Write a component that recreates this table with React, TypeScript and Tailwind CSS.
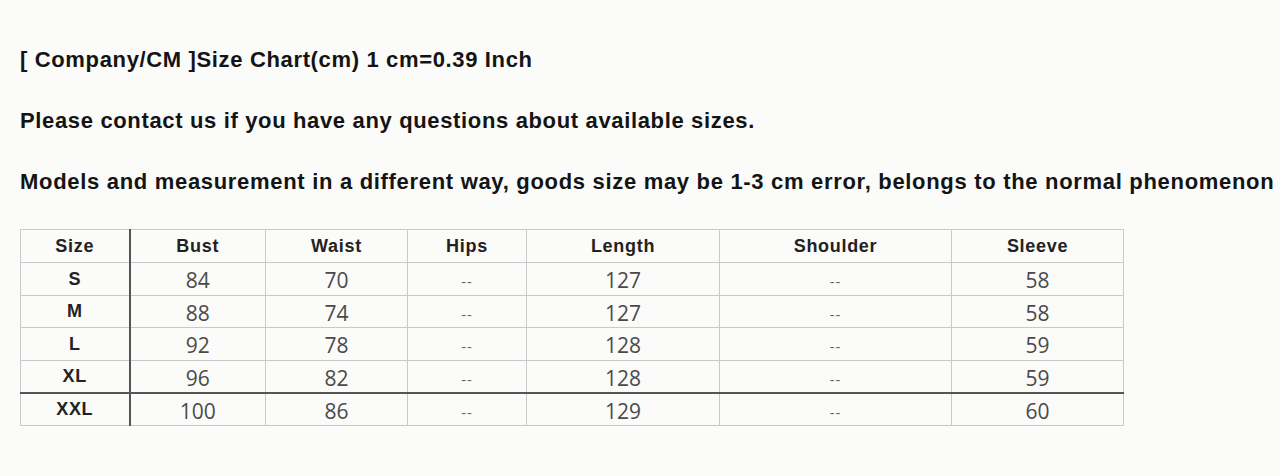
import React from "react";

const cols = [
  { name: "Size", w: 109 },
  { name: "Bust", w: 136 },
  { name: "Waist", w: 142 },
  { name: "Hips", w: 119 },
  { name: "Length", w: 193 },
  { name: "Shoulder", w: 232 },
  { name: "Sleeve", w: 172 },
];

const rows = [
  ["S", "84", "70", "--", "127", "--", "58"],
  ["M", "88", "74", "--", "127", "--", "58"],
  ["L", "92", "78", "--", "128", "--", "59"],
  ["XL", "96", "82", "--", "128", "--", "59"],
  ["XXL", "100", "86", "--", "129", "--", "60"],
];

export default function App() {
  return (
    <div
      className="w-[1280px] h-[476px] bg-[#fbfbf9] text-[#141414] pl-[20px] pt-[45px]"
      style={{ fontFamily: '"Liberation Sans", Arial, sans-serif' }}
    >
      <p className="text-[22px] font-bold leading-[30px] whitespace-nowrap tracking-[0.65px]">[ Company/CM ]Size Chart(cm) 1 cm=0.39 Inch</p>
      <p className="text-[22px] font-bold leading-[30px] mt-[31px] whitespace-nowrap tracking-[0.65px]">Please contact us if you have any questions about available sizes.</p>
      <p className="text-[22px] font-bold leading-[30px] mt-[31px] whitespace-nowrap tracking-[0.69px]">
        Models and measurement in a different way, goods size may be 1-3 cm error, belongs to the normal phenomenon
      </p>
      <table className="mt-[32px] border-collapse border border-[#c9c9c9] table-fixed">
        <colgroup>
          {cols.map((c) => (
            <col key={c.name} style={{ width: c.w }} />
          ))}
        </colgroup>
        <thead>
          <tr className="h-[33px]">
            {cols.map((c, i) => (
              <th
                key={c.name}
                className={`p-0 leading-[24px] text-[18px] font-bold tracking-[0.7px] text-[#222] border-b border-[#c9c9c9] ${
                  i === 0 ? "border-r-2 border-r-[#555]" : "border-r border-r-[#c9c9c9]"
                }`}
              >
                {c.name}
              </th>
            ))}
          </tr>
        </thead>
        <tbody>
          {rows.map((r, ri) => (
            <tr
              key={r[0]}
              className={`h-[32.5px] ${ri === 3 ? "border-b-2 border-b-[#555]" : "border-b border-b-[#c9c9c9]"}`}
            >
              {r.map((v, i) =>
                i === 0 ? (
                  <td key={i} className="p-0 leading-[24px] text-center text-[18px] font-bold tracking-[0.7px] text-[#222] border-r-2 border-r-[#555]">
                    {v}
                  </td>
                ) : (
                  <td
                    key={i}
                    className="p-0 pt-[3px] leading-[24px] text-center text-[21px] text-[#4a4a4a] border-r border-r-[#c9c9c9]"
                    style={{ fontFamily: '"Open Sans", "Noto Sans", sans-serif' }}
                  >
                    {v === "--" ? <span className="text-[15px] text-[#666] tracking-[1px]">--</span> : v}
                  </td>
                )
              )}
            </tr>
          ))}
        </tbody>
      </table>
    </div>
  );
}
